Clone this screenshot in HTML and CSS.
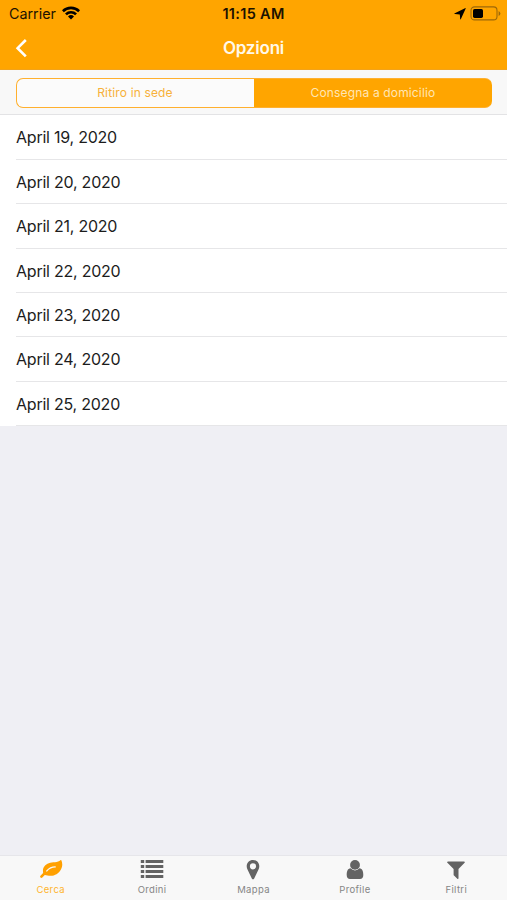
FILE: index.html
```html
<!DOCTYPE html>
<html lang="it">
<head>
<meta charset="utf-8">
<title>Opzioni</title>
<link rel="stylesheet" href="styles.css">
</head>
<body>
<div class="app">
  <header class="header">
    <div class="status">
      <div class="carrier"><span>Carrier</span>
        <svg class="wifi" viewBox="0 0 18 14" width="18" height="14"><path d="M0 4.300a12.800 12.800 0 0 1 18 0L16.200 6.200a10.300 10.300 0 0 0-14.400 0zM3 7.400a8.500 8.500 0 0 1 12 0l-1.900 1.900a5.800 5.800 0 0 0-8.200 0zM6 10.400a4.300 4.300 0 0 1 6 0l-3 3z"/></svg>
      </div>
      <span class="time">11:15 AM</span>
      <div class="power">
        <svg width="12" height="12" viewBox="0 0 12 12"><path d="M11.700.4 6.800 11.200q-.4.8-.6-.1L5.800 6.400 1 6.100Q-.2 5.800.8 5.300L11 .2q.8-.4.7.2z"/></svg>
        <svg width="31" height="15" viewBox="0 0 31 15"><rect x="1" y=".9" width="26" height="13" rx="3.500" fill="none" stroke="#9d6808" stroke-width="1.100"/><rect x="3" y="2.900" width="10" height="9" rx="1.600"/><path d="M28.600 5v5q1.800-1 1.800-2.500T28.600 5z" fill="#9d6808"/></svg>
      </div>
    </div>
    <div class="nav">
      <svg class="back" width="14" height="20" viewBox="0 0 14 20"><path d="m11.800 2-8.200 8.200 8.200 8.200"/></svg>
      <h1>Opzioni</h1>
    </div>
  </header>
  <div class="toolbar">
    <div class="segments">
      <div class="segment">Ritiro in sede</div>
      <div class="segment selected">Consegna a domicilio</div>
    </div>
  </div>
  <ul class="dates">
    <li>April 19, 2020</li>
    <li>April 20, 2020</li>
    <li>April 21, 2020</li>
    <li>April 22, 2020</li>
    <li>April 23, 2020</li>
    <li>April 24, 2020</li>
    <li>April 25, 2020</li>
  </ul>
  <nav class="tabs">
    <div class="tab active">
      <svg width="24" height="20" viewBox="0 0 24 20"><path d="M22.300.3c1.300 2.600 1.400 6-.4 9.200-2.200 4-6 6.300-10.200 6.300-2.500 0-4.300-.8-5.800-.9L4.300 13.300C3 8.600 5.400 4.800 9.800 3.200 13.500 1.900 19 2.900 21.400.3c.4-.4.700-.4.900 0z"/><path class="stem" d="M6 12.800c-1 1.200-2.200 2.400-3.600 3.800"/><path class="vein" d="M7.800 10.900c2.300-2.700 4.900-4 8.400-4"/></svg>
      <span>Cerca</span>
    </div>
    <div class="tab">
      <svg width="24" height="20" viewBox="0 0 24 20"><path d="M.8 0h3.400v3H.8zm4.800 0h17.700v3H5.600zM.8 5h3.400v3H.8zm4.800 0h17.700v3H5.600zM.8 10h3.400v3H.8zm4.800 0h17.700v3H5.600zM.8 15h3.400v3H.8zm4.800 0h17.700v3H5.600z"/></svg>
      <span>Ordini</span>
    </div>
    <div class="tab">
      <svg width="24" height="20" viewBox="0 0 24 20"><path fill-rule="evenodd" d="M12 0c3.600 0 6.300 2.700 6.300 6.300 0 1.300-.3 2.200-.8 3.200l-4.300 8.900q-1.200 1.800-2.400 0L6.500 9.500a7 7 0 0 1-.8-3.200C5.700 2.700 8.400 0 12 0zm0 3.200a3.100 3.100 0 1 0 0 6.200 3.100 3.100 0 0 0 0-6.200z"/></svg>
      <span>Mappa</span>
    </div>
    <div class="tab">
      <svg width="24" height="20" viewBox="0 0 24 20"><circle cx="12" cy="4.900" r="4.900"/><path d="M7.600 8.300a5.700 5.700 0 0 0 8.800 0c3.100.1 3.900 3.600 3.900 6.600 0 2.300-1.300 4.200-3.300 4.200H7c-2 0-3.300-1.900-3.300-4.200 0-3 .8-6.500 3.900-6.600z"/></svg>
      <span>Profile</span>
    </div>
    <div class="tab">
      <svg width="24" height="20" viewBox="0 0 24 20"><path d="M4 1.400h16c.9 0 1.100.8.600 1.300L14.500 9v9.300c0 .8-.7 1-1.200.5L10 15.600c-.3-.3-.4-.5-.4-.9V9L3.400 2.700c-.5-.5-.3-1.300.6-1.300z"/></svg>
      <span>Filtri</span>
    </div>
  </nav>
</div>
</body>
</html>
```
FILE: styles.css
```css
* { box-sizing: border-box; }
body { margin: 0; font-family: Inter, "Liberation Sans", sans-serif; }
.app { display: flex; flex-direction: column; height: 900px; background: #efeff4; color: #1c1c1c; overflow: hidden; }
.header { height: 70px; background: #ffa500; border-bottom: 1px solid #f2a31b; }
.status { display: grid; grid-template-columns: 1fr auto 1fr; align-items: center; height: 27px; padding: 0 6px 0 9px; color: #1c1200; font-size: 14.3px; }
.carrier { display: flex; align-items: center; gap: 6px; }
.wifi { margin-top: -2px; }
.wifi, .power svg { fill: #000; }
.time { font-weight: 600; font-size: 14.5px; letter-spacing: .3px; margin-right: 3px; }
.power { display: flex; justify-content: flex-end; align-items: center; gap: 4px; }
.nav { display: grid; grid-template-columns: 1fr auto 1fr; align-items: center; height: 42px; padding: 0 14px; }
.back { fill: none; stroke: #fff; stroke-width: 2.6; }
h1 { margin: 0; color: #fff8e9; font-size: 17px; font-weight: 600; letter-spacing: -.2px; }
.toolbar { height: 45.4px; padding: 8px 15px 0 16px; background: #f8f8f8; border-bottom: 1px solid #e3e3e5; }
.segments { display: flex; height: 30px; overflow: hidden; border: 1.5px solid #ffb02e; border-radius: 7px; background: linear-gradient(90deg, #fbfbfb 50%, #ffa500 50%); }
.segments:has(.selected:last-child) { border-right-color: #ffa500; }
.segment { flex: 1; text-align: center; font-size: 12px; line-height: 28px; color: #f7b13a; letter-spacing: .15px; }
.segment:first-child { padding-right: 2px; }
.selected { background: #ffa500; color: #ffe6b5; }
.dates { list-style: none; margin: 0; padding: 0 0 0 16px; background: #fff; }
.dates li { height: 44.4px; line-height: 44px; font-size: 16px; letter-spacing: -.23px; border-bottom: 1px solid #e6e6e8; }
.tabs { display: grid; grid-template-columns: repeat(5, 1fr); height: 45px; margin-top: auto; background: #f8f8f8; border-top: 1px solid #e6e6ea; }
.tab { display: flex; flex-direction: column; align-items: center; padding-top: 4px; color: #858585; font-size: 9.5px; line-height: 12px; letter-spacing: .35px; }
.tab svg { fill: #636363; }
.tab span { margin-top: 4px; }
.tab.active { color: #ffb52e; }
.tab.active svg { fill: #ffa000; }
.tab .vein, .tab .stem { fill: none; stroke: #f8f8f8; stroke-width: 1.4; stroke-linecap: round; }
.tab .stem { stroke: #ffa000; stroke-width: 2.6; }
```
